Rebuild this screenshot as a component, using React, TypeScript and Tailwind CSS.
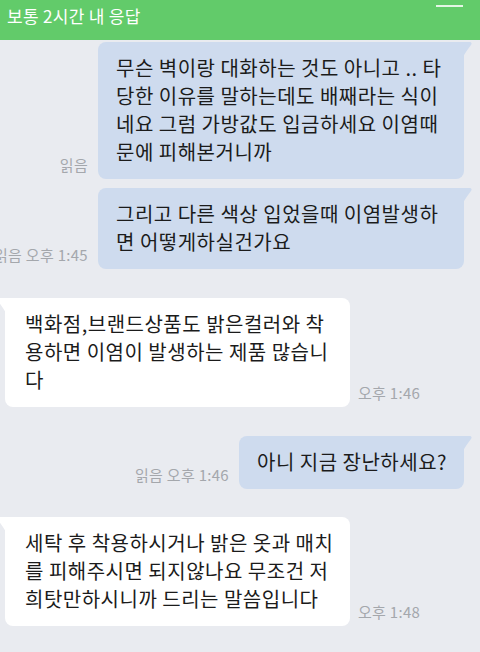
import React from 'react';

interface Message {
  id: number;
  mine: boolean;
  lines: string[];
  width: number;
  meta: string;
  gap: number;
}

const messages: Message[] = [
  {
    id: 1,
    mine: true,
    lines: [
      '무슨 벽이랑 대화하는 것도 아니고 .. 타',
      '당한 이유를 말하는데도 배째라는 식이',
      '네요 그럼 가방값도 입금하세요 이염때',
      '문에 피해본거니까',
    ],
    width: 366,
    meta: '읽음',
    gap: 2,
  },
  {
    id: 2,
    mine: true,
    lines: ['그리고 다른 색상 입었을때 이염발생하', '면 어떻게하실건가요'],
    width: 366,
    meta: '읽음 오후 1:45',
    gap: 9,
  },
  {
    id: 3,
    mine: false,
    lines: ['백화점,브랜드상품도 밝은컬러와 착', '용하면 이염이 발생하는 제품 많습니', '다'],
    width: 345,
    meta: '오후 1:46',
    gap: 29,
  },
  {
    id: 4,
    mine: true,
    lines: ['아니 지금 장난하세요?'],
    width: 225,
    meta: '읽음 오후 1:46',
    gap: 29,
  },
  {
    id: 5,
    mine: false,
    lines: ['세탁 후 착용하시거나 밝은 옷과 매치', '를 피해주시면 되지않나요 무조건 저', '희탓만하시니까 드리는 말씀입니다'],
    width: 345,
    meta: '오후 1:48',
    gap: 28,
  },
];

const Tail: React.FC<{ mine: boolean }> = ({ mine }) =>
  mine ? (
    <svg className="absolute top-0 right-[-8px] w-[9px] h-[15px]" viewBox="0 0 9 15">
      <path d="M0 0 H6.5 C8.5 0 9.2 1.5 8 3 C5 7 2 11 0 15 Z" fill="#cedbee" />
    </svg>
  ) : (
    <svg className="absolute top-0 left-[-8px] w-[9px] h-[15px]" viewBox="0 0 9 15">
      <path d="M9 0 H2.5 C0.5 0 -0.2 1.5 1 3 C4 7 7 11 9 15 Z" fill="#ffffff" />
    </svg>
  );

const Meta: React.FC<{ text: string }> = ({ text }) => (
  <span className="shrink-0 whitespace-nowrap text-[15px] leading-[20px] tracking-[0.3px] text-[#a4a7ac] mb-[4px]">
    {text}
  </span>
);

const Bubble: React.FC<{ msg: Message }> = ({ msg }) => (
  <div
    className={`relative shrink-0 rounded-[8px] pt-[12px] pb-[13px] text-[20px] leading-[28px] tracking-[0.5px] text-[#1b1b1b] ${
      msg.mine ? 'bg-[#cedbee] rounded-tr-none pl-[18px]' : 'bg-white rounded-tl-none pl-[20px]'
    }`}
    style={{ width: msg.width }}
  >
    <Tail mine={msg.mine} />
    {msg.lines.map((line, i) => (
      <div key={i} className="whitespace-nowrap">
        {line}
      </div>
    ))}
  </div>
);

export default function App() {
  return (
    <div className="w-[480px] h-[652px] overflow-hidden bg-[#e9ebf0] font-['Noto_Sans_CJK_KR','Noto_Sans',sans-serif]">
      {/* header */}
      <div className="h-[40px] bg-[#62cb6a] flex items-start justify-between pl-[7px] pr-[17px]">
        <span className="mt-[6px] text-[17px] leading-[20px] tracking-[0.3px] text-white">보통 2시간 내 응답</span>
        <div className="mt-[5px] w-[27px] h-[2px] bg-[#e4f6e5]" />
      </div>

      {/* messages */}
      <div className="flex flex-col">
        {messages.map((msg) =>
          msg.mine ? (
            <div
              key={msg.id}
              className="flex justify-end items-end gap-[10px] pr-[16px]"
              style={{ marginTop: msg.gap }}
            >
              <Meta text={msg.meta} />
              <Bubble msg={msg} />
            </div>
          ) : (
            <div
              key={msg.id}
              className="flex justify-start items-end gap-[8px] pl-[5px]"
              style={{ marginTop: msg.gap }}
            >
              <Bubble msg={msg} />
              <Meta text={msg.meta} />
            </div>
          )
        )}
      </div>
    </div>
  );
}
